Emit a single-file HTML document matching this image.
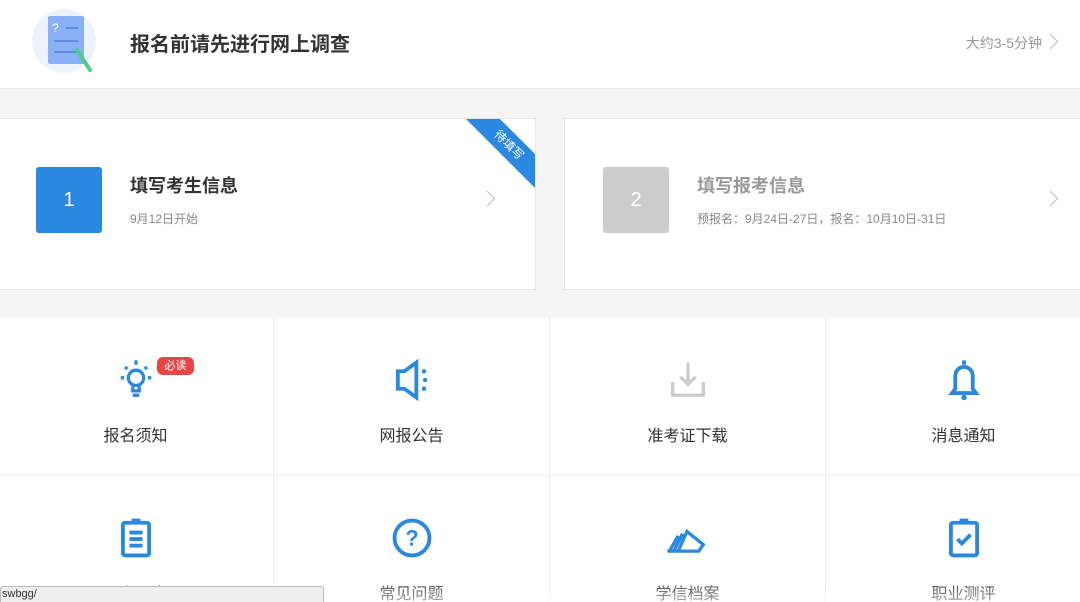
<!DOCTYPE html>
<html><head><meta charset="utf-8"><style>
*{margin:0;padding:0;box-sizing:border-box}
html,body{width:1080px;height:602px;overflow:hidden}
body{background:#f5f5f5;font-family:"Liberation Sans","Noto Sans CJK SC",sans-serif;position:relative}
.hdr{position:absolute;left:0;top:0;width:1080px;height:89px;background:#fff;border-bottom:1px solid #e6e6e6}
.hdr .t{position:absolute;left:130px;top:28px;font-size:20px;color:#333;font-weight:bold}
.hdr .r{position:absolute;right:38px;top:33px;font-size:14px;color:#999}
.chev{position:absolute;width:11px;height:11px;border-right:1.5px solid #bbb;border-top:1.5px solid #bbb;transform:rotate(45deg)}
.card{position:absolute;top:118px;height:172px;background:#fff;border:1px solid #e6e6e6;overflow:hidden}
.num{position:absolute;top:48px;width:66px;height:66px;border-radius:3px;color:#fff;font-size:20px;text-align:center;line-height:66px}
.ct{position:absolute;top:53px;font-size:18px;font-weight:bold}
.cs{position:absolute;top:91px;font-size:12px;color:#888}
.ribbon{position:absolute;right:-34px;top:14px;width:120px;height:24px;background:#2a88e0;color:#fff;font-size:12px;text-align:center;line-height:24px;transform:rotate(45deg)}
.grid{position:absolute;left:0;top:318px;width:1080px;height:284px;background:#fff;overflow:hidden}
.cell{position:absolute;width:276px;height:158px;border-right:1px solid #ececec;border-bottom:1px solid #ececec}
.cell svg{position:absolute;left:50%;top:38px;transform:translateX(-50%)}
.cell .l{position:absolute;left:0;right:0;top:104px;text-align:center;font-size:16px;color:#333}
.fade{position:absolute;left:0;top:580px;width:1080px;height:22px;background:linear-gradient(rgba(255,255,255,0),rgba(255,255,255,.6))}
.sb{position:absolute;left:0;top:586px;width:324px;height:16px;background:#eee;border:1px solid #bbb;border-bottom:none;border-radius:3px 3px 0 0;font-size:11px;color:#333;padding-left:1px;line-height:14px;overflow:hidden}
</style></head><body>
<div class="hdr">
<svg style="position:absolute;left:32px;top:8px" width="66" height="66" viewBox="0 0 66 66"><circle cx="32" cy="33" r="32" fill="#eef3fb"/><rect x="16" y="8" width="36" height="48" rx="2" fill="#8ab0f5"/><text x="20" y="24" font-size="12" fill="#fff" font-family="Liberation Sans">?</text><rect x="34" y="19" width="12" height="2" fill="#5b8ce8"/><rect x="22" y="32" width="24" height="2" fill="#5b8ce8"/><rect x="22" y="43" width="24" height="2" fill="#5b8ce8"/><line x1="45" y1="42" x2="58" y2="62" stroke="#4ccf8a" stroke-width="4" stroke-linecap="round"/></svg>
<div class="t">报名前请先进行网上调查</div>
<div class="r">大约3-5分钟</div>
<div class="chev" style="right:24px;top:36px"></div>
</div>
<div class="card" style="left:0;width:536px;border-left:none">
<div class="num" style="left:36px;background:#2a88e0">1</div>
<div class="ct" style="left:130px;color:#333">填写考生信息</div>
<div class="cs" style="left:130px">9月12日开始</div>
<div class="chev" style="right:42px;top:74px"></div>
<div class="ribbon">待填写</div>
</div>
<div class="card" style="left:564px;width:516px;border-right:none">
<div class="num" style="left:38px;background:#ccc">2</div>
<div class="ct" style="left:132px;color:#999">填写报考信息</div>
<div class="cs" style="left:132px">预报名：9月24日-27日，报名：10月10日-31日</div>
<div class="chev" style="right:24px;top:74px"></div>
</div>
<div class="grid">
<div class="cell" style="left:-2px;top:0">
<svg width="48" height="48" viewBox="0 0 44 44"><g fill="none" stroke="#2a88e0" stroke-width="3"><circle cx="22" cy="20" r="7"/><path d="M19 28v4h6v-4M19 36h6M22 4v4M8 20h3M33 20h3M12 10l2 2M32 10l-2 2"/></g></svg>
<div style="position:absolute;left:159px;top:39px;width:37px;height:18px;background:#e84545;border-radius:6px;color:#fff;font-size:11px;text-align:center;line-height:18px">必读</div>
<div class="l">报名须知</div></div>
<div class="cell" style="left:274px;top:0"><svg width="48" height="48" viewBox="0 0 44 44"><g fill="none" stroke="#2a88e0" stroke-width="3.5"><path d="M9 14h6l11-8v32l-11-8H9z"/></g><g fill="#2a88e0"><circle cx="33" cy="14" r="2"/><circle cx="34" cy="22" r="2"/><circle cx="33" cy="30" r="2"/></g></svg><div class="l">网报公告</div></div>
<div class="cell" style="left:550px;top:0"><svg width="48" height="48" viewBox="0 0 44 44"><g fill="none" stroke="#ccc" stroke-width="3"><path d="M22 6v20M15 19l7 7 7-7M8 24v12h28V24"/></g></svg><div class="l">准考证下载</div></div>
<div class="cell" style="left:826px;top:0"><svg width="48" height="48" viewBox="0 0 44 44"><g fill="none" stroke="#2a88e0" stroke-width="3.5"><path d="M22 4v4M14 30V18a8 8 0 0 1 16 0v12l3 4H11z"/></g><circle cx="22" cy="38" r="2.5" fill="#2a88e0"/></svg><div class="l">消息通知</div></div>
<div class="cell" style="left:-2px;top:158px"><svg width="48" height="48" viewBox="0 0 44 44"><g fill="none" stroke="#2a88e0" stroke-width="3.5"><rect x="10" y="8" width="24" height="30" rx="2"/><path d="M18 6h8M16 17h12M16 23h12M16 29h12"/></g></svg><div class="l">网上调查</div></div>
<div class="cell" style="left:274px;top:158px"><svg width="48" height="48" viewBox="0 0 44 44"><circle cx="22" cy="22" r="16" fill="none" stroke="#2a88e0" stroke-width="3.5"/><text x="22" y="29" font-size="20" font-weight="bold" fill="#2a88e0" text-anchor="middle" font-family="Liberation Sans">?</text></svg><div class="l">常见问题</div></div>
<div class="cell" style="left:550px;top:158px"><svg width="48" height="48" viewBox="0 0 44 44"><g fill="none" stroke="#2a88e0" stroke-width="3"><path d="M5 34l8-14M9 34l8-16M13 34l8-18 15 12-4 6z M3 34h30"/></g></svg><div class="l">学信档案</div></div>
<div class="cell" style="left:826px;top:158px"><svg width="48" height="48" viewBox="0 0 44 44"><g fill="none" stroke="#2a88e0" stroke-width="3.5"><rect x="10" y="8" width="24" height="30" rx="2"/><path d="M18 6h8M16 23l4 4 8-8"/></g></svg><div class="l">职业测评</div></div>
</div>
<div class="fade"></div>
<div class="sb">swbgg/</div>
</body></html>
